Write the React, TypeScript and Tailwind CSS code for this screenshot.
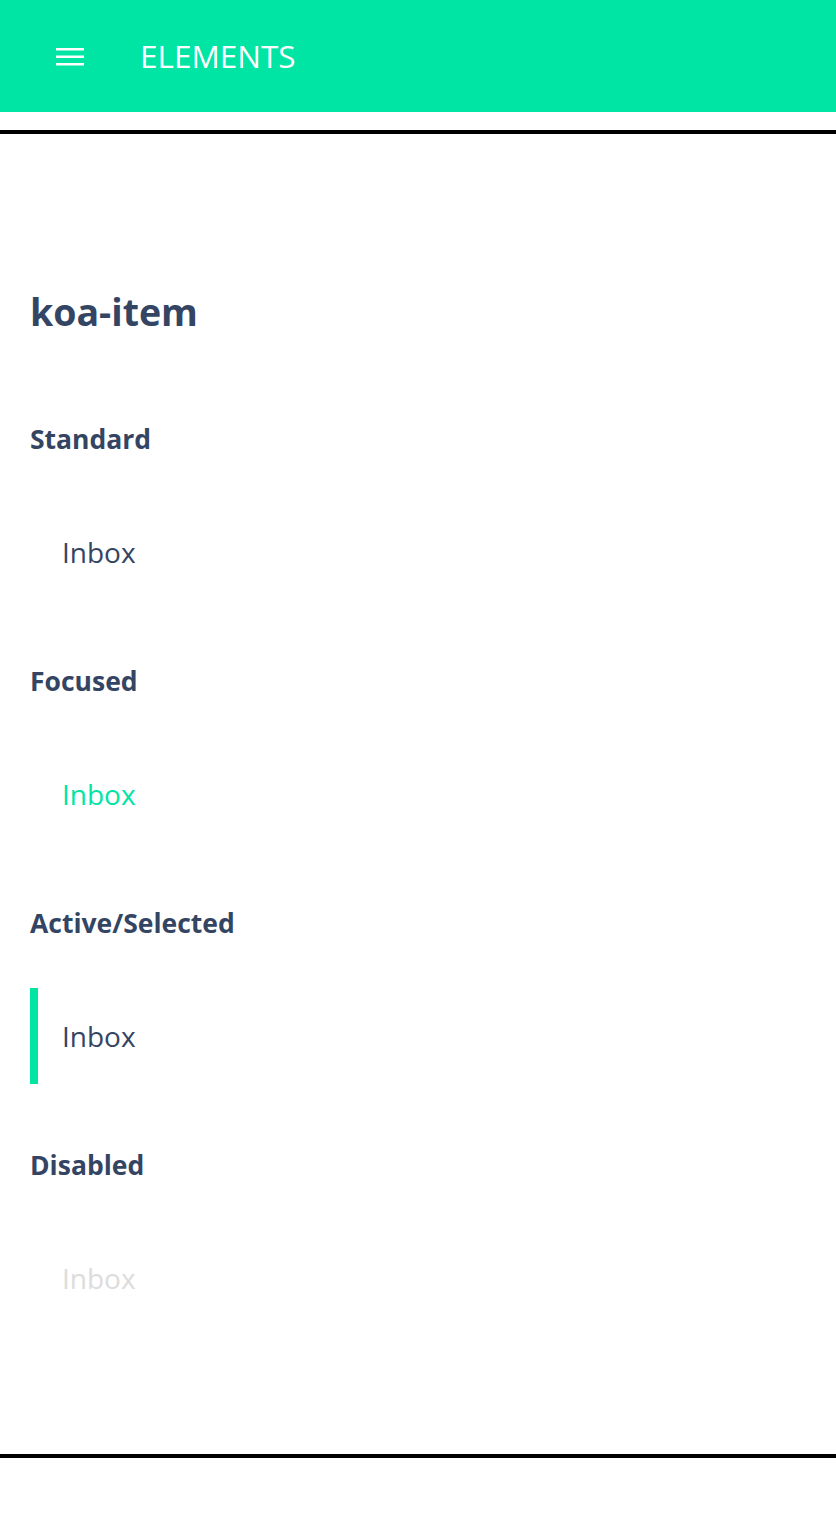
import React from "react";

function Item({ variant }: { variant: "standard" | "focused" | "active" | "disabled" }) {
  const color =
    variant === "focused" ? "text-[#00e5a3]" : variant === "disabled" ? "text-[#dcdcdc]" : "text-[#344563]";
  const border = variant === "active" ? "border-[#00e5a3]" : "border-transparent";
  return (
    <div className={`flex h-[96px] items-center border-l-[8px] ${border} pl-[24px]`}>
      <span className={`text-[28px] leading-none ${color}`}>Inbox</span>
    </div>
  );
}

function Section({ title, variant }: { title: string; variant: "standard" | "focused" | "active" | "disabled" }) {
  return (
    <div className="flex flex-col">
      <h3 className="h-[36px] flex items-center text-[26.5px] font-bold text-[#344563]">{title}</h3>
      <div className="mt-[46px]">
        <Item variant={variant} />
      </div>
    </div>
  );
}

export default function App() {
  return (
    <div className="min-h-[1520px] bg-white" style={{ fontFamily: '"Open Sans", sans-serif' }}>
      <header className="flex h-[112px] items-center bg-[#00e5a3] pl-[56px]">
        <svg width="28" height="18" viewBox="0 0 28 18" className="mt-[2px]">
          <rect x="0" y="0" width="28" height="2.5" fill="white" />
          <rect x="0" y="7.5" width="28" height="2.5" fill="white" />
          <rect x="0" y="15" width="28" height="2.5" fill="white" />
        </svg>
        <span className="ml-[56px] text-[31.5px] leading-none text-white">ELEMENTS</span>
      </header>
      <div className="mt-[18px] h-[4px] bg-black" />
      <main className="px-[30px]">
        <h1 className="mt-[156px] h-[44px] flex items-center text-[37.5px] font-bold text-[#344563]">koa-item</h1>
        <div className="mt-[88px] flex flex-col gap-[64px]">
          <Section title="Standard" variant="standard" />
          <Section title="Focused" variant="focused" />
          <Section title="Active/Selected" variant="active" />
          <Section title="Disabled" variant="disabled" />
        </div>
      </main>
      <div className="mt-[128px] h-[4px] bg-black" />
    </div>
  );
}
